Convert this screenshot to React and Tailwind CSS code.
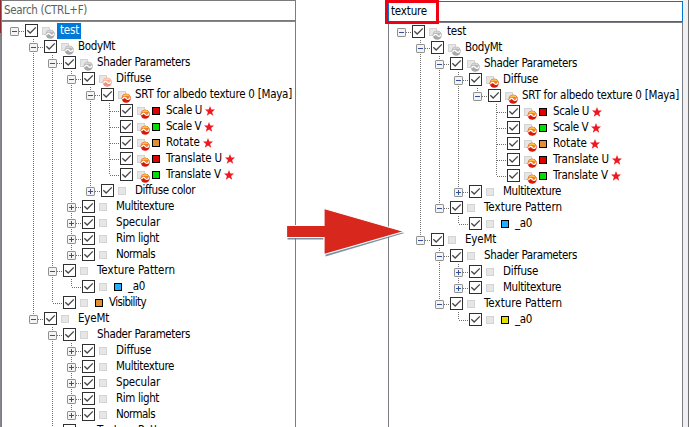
import React from "react";

const red = "bg-[#e00000]";
const green = "bg-[#00e000]";
const orange = "bg-[#e09030]";
const blue = "bg-[#20b0ff]";
const yellow = "bg-[#e0e000]";

const srt = (ball) => ({
  label: "SRT for albedo texture 0 [Maya]", w: 157, ball, open: true,
  children: [
    { label: "Scale U", w: 36, ball: "hot", color: red, star: true },
    { label: "Scale V", w: 35, ball: "hot", color: green, star: true },
    { label: "Rotate", w: 34, ball: "hot", color: orange, star: true },
    { label: "Translate U", w: 56, ball: "hot", color: red, star: true },
    { label: "Translate V", w: 55, ball: "hot", color: green, star: true },
  ],
});

const closed = (label, w) => ({ label, w, open: false });

const leftTree = {
  label: "test", w: 19, ball: "gray", open: true, selected: true,
  children: [
    {
      label: "BodyMt", w: 37, ball: "gray", open: true,
      children: [
        {
          label: "Shader Parameters", w: 93, ball: "gray", open: true,
          children: [
            { label: "Diffuse", w: 35, ball: "faded", open: true, children: [srt("hot"), closed("Diffuse color", 60)] },
            closed("Multitexture", 58),
            closed("Specular", 44),
            closed("Rim light", 43),
            closed("Normals", 39),
          ],
        },
        { label: "Texture Pattern", w: 78, open: true, children: [{ label: "_a0", w: 17, color: blue }] },
        { label: "Visibility", w: 37, color: orange },
      ],
    },
    {
      label: "EyeMt", w: 31, open: true,
      children: [
        {
          label: "Shader Parameters", w: 93, open: true,
          children: [
            closed("Diffuse", 35),
            closed("Multitexture", 58),
            closed("Specular", 44),
            closed("Rim light", 43),
            closed("Normals", 39),
          ],
        },
        { label: "Texture Pattern", w: 78, open: true },
      ],
    },
  ],
};

const rightTree = {
  label: "test", w: 19, ball: "gray", open: true,
  children: [
    {
      label: "BodyMt", w: 37, ball: "gray", open: true,
      children: [
        {
          label: "Shader Parameters", w: 93, ball: "gray", open: true,
          children: [
            { label: "Diffuse", w: 35, ball: "hot", open: true, children: [srt("hot")] },
            closed("Multitexture", 58),
          ],
        },
        { label: "Texture Pattern", w: 78, open: true, children: [{ label: "_a0", w: 17, color: blue }] },
      ],
    },
    {
      label: "EyeMt", w: 31, open: true,
      children: [
        {
          label: "Shader Parameters", w: 93, open: true,
          children: [closed("Diffuse", 35), closed("Multitexture", 58)],
        },
        { label: "Texture Pattern", w: 78, open: true, children: [{ label: "_a0", w: 17, color: yellow }] },
      ],
    },
  ],
};

function flatten(node, guides = [], last = true) {
  const row = { ...node, guides, last, root: guides.length === 0 };
  const kids = node.children || [];
  return [row, ...kids.flatMap((k, i) => flatten(k, [...guides, !last], i === kids.length - 1))];
}

const dotsV = "w-px bg-[repeating-linear-gradient(180deg,#707070_0px_1px,transparent_1px_2px)]";
const dotsH = "h-px bg-[repeating-linear-gradient(90deg,#707070_0px_1px,transparent_1px_2px)]";

function Guide({ on }) {
  return <div className="flex h-4 w-[19px] shrink-0 pl-[9px]">{on && <div className={`${dotsV} h-4`} />}</div>;
}

function Branch({ row }) {
  const box = row.open !== undefined;
  return (
    <div className="relative flex h-4 w-5 shrink-0 items-center">
      <div className="ml-[9px] flex h-4 w-px flex-col">
        <div className={`h-2 ${row.root ? "" : dotsV}`} />
        <div className={`h-2 ${row.last ? "" : dotsV}`} />
      </div>
      <div className={`${dotsH} mt-px w-[10px]`} />
      {box && (
        <svg className="absolute left-[5px] top-1" width="9" height="9" viewBox="0 0 9 9">
          <rect x=".5" y=".5" width="8" height="8" rx=".6" fill="#f4f4f4" stroke="#8f8f8f" />
          <path d={row.open ? "M2 4.5H7" : "M2 4.5H7M4.5 2V7"} stroke="#3050a0" />
        </svg>
      )}
    </div>
  );
}

function Check() {
  return (
    <svg className="mt-px shrink-0 self-start" width="13" height="13" viewBox="0 0 13 13">
      <rect x=".5" y=".5" width="12" height="12" fill="#fff" stroke="#303030" />
      <path d="M2.3 6.2L5.2 9L10.8 3.4" fill="none" stroke="#484848" strokeWidth="1.3" />
    </svg>
  );
}

const balls = {
  gray: ["#d8d8d8", "#b8b8b8", "#a8a8a8"],
  faded: ["#fbd9a0", "#f8b090", "#f09080"],
  hot: ["#ffc850", "#f08020", "#d81808"],
};

function TypeIcon({ ball }) {
  const c = balls[ball];
  return (
    <svg className="ml-1 shrink-0" width="13" height="16" viewBox="0 0 13 16">
      <rect x=".5" y="4.5" width="7" height="7" fill="#e6e6e6" stroke="#d4d4d4" />
      {c && (
        <g>
          <circle cx="8.2" cy="11.2" r="4.5" fill={c[2]} />
          <path d="M3.7 11.2A4.5 4.5 0 0 1 12.7 11.2Z" fill={c[1]} />
          <path d="M4.4 9.6A4.2 4.2 0 0 1 12 9.6Q8 7.8 4.4 9.6Z" fill={c[0]} />
          <path d="M4.4 12.3Q6.2 9 8.2 11.4T12.1 10.6" fill="none" stroke="#fff" strokeWidth="1.3" />
        </g>
      )}
    </svg>
  );
}

function Star() {
  return (
    <svg className="ml-px shrink-0" width="10" height="10" viewBox="0 0 10 10">
      <path d="M5 .1L6.3 3.6H10L7.1 5.9L8.2 9.8L5 7.5L1.8 9.8L2.9 5.9L0 3.6H3.7Z" fill="#f01820" />
    </svg>
  );
}

function FitText({ text, width }) {
  const ref = React.useRef(null);
  const [gap, setGap] = React.useState(0);
  React.useLayoutEffect(() => {
    const natural = ref.current.getBoundingClientRect().width;
    setGap((width - natural) / text.length);
  }, []);
  return <span ref={ref} style={{ letterSpacing: `${gap}px` }}>{text}</span>;
}

function Row({ row }) {
  const indent = row.color ? "ml-[3px]" : row.root ? "ml-[2px]" : "ml-px";
  return (
    <div className="flex h-4 items-center">
      {row.guides.map((g, i) => <Guide key={i} on={g} />)}
      <Branch row={row} />
      <Check />
      <TypeIcon ball={row.ball} />
      {row.color && <div className={`ml-[2px] h-2 w-2 shrink-0 border border-black ${row.color}`} />}
      <div className={`flex h-4 shrink-0 items-start whitespace-pre pl-[3px] pr-[2px] leading-[14px] ${indent} ${row.selected ? "bg-[#0078d7] text-white" : ""}`}>
        <FitText text={row.label} width={row.w} />
      </div>
      {row.star && <Star />}
    </div>
  );
}

function Tree({ root }) {
  return flatten(root).map((row, i) => <Row key={i} row={row} />);
}

export default function App() {
  return (
    <div className="flex h-[427px] w-[689px] overflow-hidden bg-white font-['DejaVu_Sans_Condensed','DejaVu_Sans',sans-serif] text-[11.5px] text-black">
      <div className="flex h-full w-px flex-col bg-[#84868c]">
        <div className="h-[33px] bg-[#8c2c30]" />
      </div>
      <div className="flex h-full w-[295px] flex-col overflow-hidden border-x border-[#7a7d85]">
        <div className="flex h-[21px] shrink-0 items-start border-y border-[#7a7a7a] pl-[2px] pt-[2px] leading-[14px] text-[#606060]">
          <FitText text="Search (CTRL+F)" width={83} />
        </div>
        <div className="border-t border-[#84868c] pl-[3px] pt-px"><Tree root={leftTree} /></div>
      </div>
      <div className="relative w-[92px]">
        <svg className="absolute -left-[14px] top-[204px] z-10" width="124" height="56" viewBox="282 204 124 56">
          <path d="M287 227H325V210L404 232.5L325 256V239H287Z" fill="#5a7f94" opacity=".85" transform="translate(.5 .5)" />
          <path d="M286.5 225.5H324V208.5L404 231.5L324 254.5V237.5H286.5Z" fill="#d8281e" stroke="#fff" strokeWidth="1.2" />
        </svg>
      </div>
      <div className="relative h-full w-[295px] pt-px">
        <div className="flex h-[21px] items-start border border-[#0078d7] pl-[2px] pt-[2px] leading-[14px]">
          <FitText text="texture" width={36} />
        </div>
        <div className="h-[405px] overflow-hidden border border-b-0 border-[#7a7d85] pl-[3px] pt-px">
          <Tree root={rightTree} />
        </div>
        <div className="absolute -left-[3px] top-0 h-6 w-[54px] border-[3px] border-[#f00010]" />
      </div>
      <div className="h-full flex-1 border-r border-[#707070] bg-[#f0f0f0]" />
    </div>
  );
}
